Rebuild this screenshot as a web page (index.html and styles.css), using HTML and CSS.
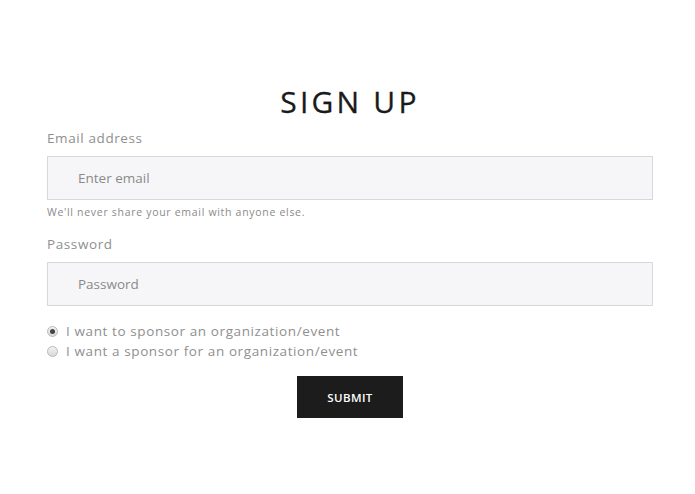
FILE: index.html
```html
<!DOCTYPE html>
<html lang="en">
<head>
  <meta charset="UTF-8" />
  <meta name="viewport" content="width=device-width, initial-scale=1.0"/>
  <title>Sign Up</title>
  <link rel="stylesheet" href="styles.css">
</head>
<body>

  <!-- SIGN UP FORM -->
  <form class="signup">
    <h1>SIGN UP</h1>

    <div class="field">
      <label for="email">Email address</label>
      <input type="email" id="email" placeholder="Enter email">
      <small class="help">We'll never share your email with anyone else.</small>
    </div>

    <div class="field">
      <label for="password">Password</label>
      <input type="password" id="password" placeholder="Password">
    </div>

    <div class="choices">
      <label class="choice"><input type="radio" name="role" checked> I want to sponsor an organization/event</label>
      <label class="choice"><input type="radio" name="role"> I want a sponsor for an organization/event</label>
    </div>

    <button type="button" class="btn">SUBMIT</button>
  </form>

</body>
</html>
```

FILE: styles.css
```css
* {
  margin: 0; padding: 0;
  box-sizing: border-box;
  font-family: 'Open Sans', 'Noto Sans', sans-serif;
}

body {
  background: #fff;
  padding: 84px 42px 0 47px;
}

.signup {
  display: flex;
  flex-direction: column;
  width: 606px;
}

h1 {
  text-align: center;
  font-size: 30px;
  font-weight: 400;
  letter-spacing: 3.2px;
  color: #1a1a1a;
  line-height: 36px;
  margin-bottom: 8px;
  -webkit-text-stroke: 0.3px #1a1a1a;
}

.field {
  display: flex;
  flex-direction: column;
  margin-bottom: 15px;
}

.field label {
  font-size: 13.5px;
  color: #8f8f8f;
  letter-spacing: 0.6px;
  line-height: 20px;
  margin-bottom: 8px;
}

.field input {
  height: 44px;
  background: #f6f6f8;
  border: 1px solid #d8d8dc;
  border-radius: 0;
  padding: 0 30px;
  font-size: 13.5px;
  color: #555;
  outline: none;
}

.field input::placeholder {
  color: #8a8a8a;
}

.help {
  font-size: 10.5px;
  color: #8a8a8a;
  letter-spacing: 0.7px;
  line-height: 14px;
  margin-top: 5px;
}

.choices {
  display: flex;
  flex-direction: column;
}

.choice {
  display: flex;
  align-items: center;
  font-size: 13.5px;
  color: #8f8f8f;
  letter-spacing: 0.6px;
  line-height: 20px;
}

.choice input {
  appearance: none;
  -webkit-appearance: none;
  width: 11px;
  height: 11px;
  margin: 0 8px 0 0;
  border-radius: 50%;
  border: 1px solid #b9b9b9;
  background: linear-gradient(#f2f2f2, #d9d9d9);
  display: flex;
  align-items: center;
  justify-content: center;
}

.choice input:checked::after {
  content: '';
  width: 5px;
  height: 5px;
  border-radius: 50%;
  background: #444;
}

.btn {
  align-self: center;
  margin-top: 15px;
  width: 106px;
  height: 42px;
  background: #1c1c1c;
  color: #fff;
  border: none;
  font-size: 11.5px;
  font-weight: 600;
  letter-spacing: 0.4px;
  cursor: pointer;
}
```
